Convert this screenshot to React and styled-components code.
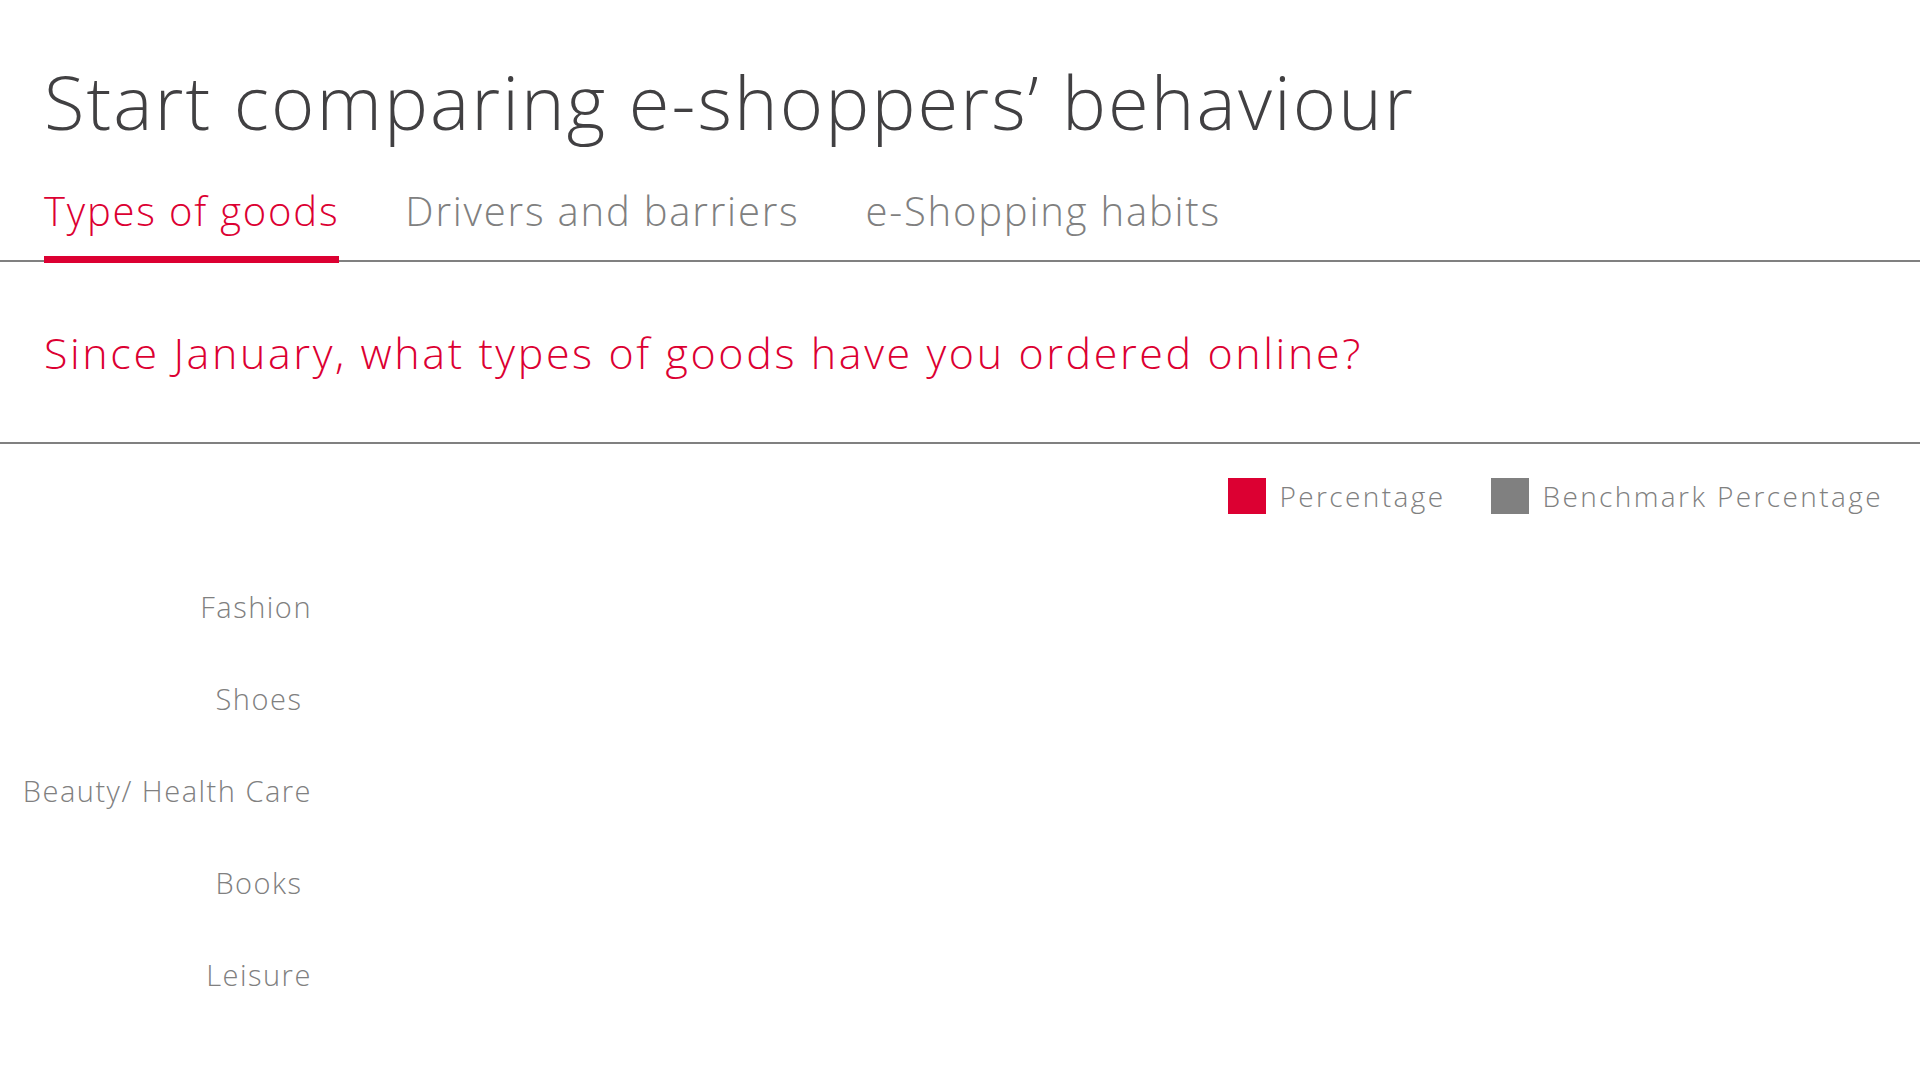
import React, { useState } from "react";
import styled, { createGlobalStyle } from "styled-components";

const GlobalStyle = createGlobalStyle`
  html, body {
    margin: 0;
    padding: 0;
    background: #ffffff;
    font-family: "Open Sans", "Lato", sans-serif;
  }
`;

const RED = "#dc0032";
const GREY = "#808080";

export const Page = styled.div`
  width: 1920px;
  height: 1080px;
  overflow: hidden;
  background: #fff;
`;

export const Title = styled.h1`
  margin: 0;
  padding: 52px 0 0 44px;
  font-size: 74px;
  font-weight: 300;
  line-height: 100px;
  color: #414042;
  letter-spacing: 2.1px;
`;

export const TabBar = styled.div`
  display: flex;
  margin-top: 31px;
  border-bottom: 2px solid ${GREY};
  padding-left: 44px;
  gap: 66px;
`;

export const Tab = styled.div`
  font-size: 40px;
  font-weight: 300;
  line-height: 56px;
  letter-spacing: 1.8px;
  padding-bottom: 17px;
  color: ${(p) => (p.active ? RED : GREY)};
  border-bottom: 7px solid ${(p) => (p.active ? RED : "transparent")};
  margin-bottom: -3px;
  cursor: pointer;
`;

export const QuestionRow = styled.div`
  padding: 60px 0 58px 44px;
  border-bottom: 2px solid ${GREY};
`;

export const Question = styled.h2`
  margin: 0;
  font-size: 43px;
  font-weight: 300;
  line-height: 62px;
  letter-spacing: 2.6px;
  color: ${RED};
`;

export const Legend = styled.div`
  display: flex;
  justify-content: flex-end;
  align-items: center;
  gap: 46px;
  padding: 33px 37px 0 0;
`;

export const LegendItem = styled.div`
  display: flex;
  align-items: center;
  gap: 13px;
  font-size: 28px;
  font-weight: 300;
  letter-spacing: 2.4px;
  color: ${GREY};
`;

export const Swatch = styled.span`
  display: block;
  width: 38px;
  height: 36px;
  background: ${(p) => p.color};
`;

export const Chart = styled.div`
  display: grid;
  grid-template-columns: 312px 1fr;
  grid-auto-rows: 92px;
  padding-top: 45px;
`;

export const Label = styled.div`
  display: flex;
  justify-content: flex-end;
  align-items: center;
`;

export const LabelText = styled.span`
  min-width: 106px;
  text-align: center;
  white-space: nowrap;
  font-size: 29px;
  font-weight: 300;
  letter-spacing: 1.5px;
  color: ${GREY};
`;

export const BarTrack = styled.div``;

const tabs = ["Types of goods", "Drivers and barriers", "e-Shopping habits"];
const categories = ["Fashion", "Shoes", "Beauty/ Health Care", "Books", "Leisure"];

const App = () => {
  const [active, setActive] = useState(0);
  return (
    <Page>
      <GlobalStyle />
      <Title>Start comparing e-shoppers’ behaviour</Title>
      <TabBar>
        {tabs.map((t, i) => (
          <Tab key={t} active={i === active} onClick={() => setActive(i)}>
            {t}
          </Tab>
        ))}
      </TabBar>
      <QuestionRow>
        <Question>Since January, what types of goods have you ordered online?</Question>
      </QuestionRow>
      <Legend>
        <LegendItem>
          <Swatch color={RED} />
          Percentage
        </LegendItem>
        <LegendItem>
          <Swatch color={GREY} />
          Benchmark Percentage
        </LegendItem>
      </Legend>
      <Chart>
        {categories.map((c) => (
          <React.Fragment key={c}>
            <Label>
              <LabelText>{c}</LabelText>
            </Label>
            <BarTrack />
          </React.Fragment>
        ))}
      </Chart>
    </Page>
  );
};

export default App;
